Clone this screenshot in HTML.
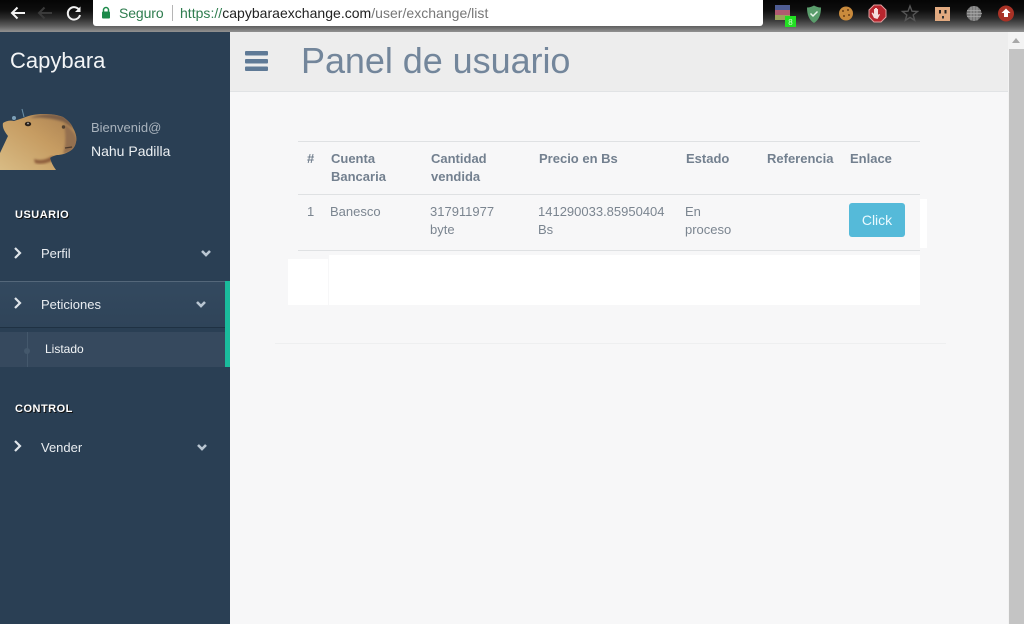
<!DOCTYPE html>
<html lang="es">
<head>
<meta charset="utf-8">
<title>Panel de usuario</title>
<style>
html,body{margin:0;padding:0;width:1024px;height:624px;overflow:hidden;background:#f7f7f8;font-family:"Liberation Sans",Arial,sans-serif}
.a{position:absolute;white-space:nowrap}
#chrome{position:absolute;left:0;top:0;width:1024px;height:32px;background:linear-gradient(#050505 0,#0d0d0d 10px,#2b2b2b 18px,#5e5e5e 26px,#8a8a8a 31px,#8f8f8f 32px)}
#url{position:absolute;left:93px;top:0;width:670px;height:26px;background:#fff;border-radius:0 0 3px 3px}
#side{position:absolute;left:0;top:32px;width:230px;height:592px;background:#2a3f54}
#head{position:absolute;left:230px;top:32px;width:778px;height:59px;background:#ededed;border-bottom:1px solid #e1e3e5}
#scroll{position:absolute;left:1008px;top:32px;width:16px;height:592px;background:#f3f3f3}
.th{font-weight:bold;font-size:13px;line-height:18px;color:#73808f}
.td{font-size:13px;line-height:18px;color:#7b8590}
.nav{font-size:13px;color:#e9edf1;line-height:16px}
.sec{font-size:11px;font-weight:bold;color:#fff;letter-spacing:.5px;line-height:13px;text-shadow:1px 1px 0 #111}
</style>
</head>
<body>
<div id="chrome"></div>
<svg class="a" style="left:0;top:0" width="90" height="28" viewBox="0 0 90 28" fill="none">
<path d="M25 13H12M17.500 7.500L12 13l5.500 5.500" stroke="#f2f2f2" stroke-width="2"/>
<path d="M52 13H39M44.500 7.500L39 13l5.500 5.500" stroke="#3a3a3a" stroke-width="2"/>
<path d="M79.500 10.500A6.200 6.200 0 1 0 80 15" stroke="#f2f2f2" stroke-width="2"/>
<path d="M80.500 6.500v5.500H75z" fill="#f2f2f2"/>
</svg>
<div id="url"></div>
<svg class="a" style="left:101px;top:6px" width="10" height="13" viewBox="0 0 10 13"><path d="M2.500 6V4a2.500 2.500 0 0 1 5 0v2" fill="none" stroke="#1c8a4a" stroke-width="1.500"/><rect x="1" y="5.500" width="8" height="7" rx="1" fill="#1c8a4a"/></svg>
<div class="a" style="left:119px;top:5px;font-size:14px;line-height:17px;color:#2f7d4f;letter-spacing:-.1px">Seguro</div>
<div class="a" style="left:172px;top:5px;width:1px;height:16px;background:#b5b5b5"></div>
<div class="a" style="left:180px;top:5px;font-size:14px;line-height:17px;color:#777;letter-spacing:.02px"><span style="color:#2f7d4f">https://</span><span style="color:#222">capybaraexchange.com</span>/user/exchange/list</div>

<!-- toolbar extension icons -->
<svg class="a" style="left:764px;top:0" width="260" height="30" viewBox="0 0 260 30">
<rect x="11" y="5" width="15" height="5" fill="#4f5d94"/><rect x="11" y="10" width="15" height="5" fill="#b05a70"/><rect x="11" y="15" width="15" height="5" fill="#9aa35a"/>
<rect x="21" y="16" width="11" height="11" fill="#22e022"/><text x="26.500" y="25" font-size="8" fill="#c8ffc8" text-anchor="middle" font-family="Liberation Sans">8</text>
<path d="M43 7.500c3 0 5-1 7-2 2 1 4 2 7 2 0 7-2 12.500-7 15.500-5-3-7-8.500-7-15.500z" fill="#5a9d6c"/><path d="M46.500 13.500l2.500 2.500 4.500-4.500" fill="none" stroke="#e8f5ea" stroke-width="1.500"/>
<circle cx="82" cy="13.500" r="7" fill="#c98a3c"/><circle cx="79" cy="11" r="1" fill="#6b3f17"/><circle cx="84" cy="10" r="1" fill="#6b3f17"/><circle cx="85" cy="15" r="1" fill="#6b3f17"/><circle cx="80" cy="16" r="1" fill="#6b3f17"/>
<path d="M110 5h7l5 5v7l-5 5h-7l-5-5v-7z" fill="#b8262e" stroke="#e2a0a0" stroke-width="1"/><path d="M110 18l-2.500-5 1-.5 1.500 1.500V9h1v3-4h1v4-4h1v4-3h1v6l1-1 1 .5-2.500 4.500z" fill="#f5dcdc"/>
<path d="M146 6l2 5.200 5.500.3-4.300 3.500 1.500 5.400-4.700-3-4.700 3 1.500-5.400-4.300-3.500 5.500-.3z" fill="none" stroke="#555" stroke-width="1.400"/>
<rect x="171" y="7" width="15" height="14" fill="#e2aa80"/><rect x="175" y="10" width="2" height="3.500" fill="#222"/><rect x="180.500" y="10" width="2" height="3.500" fill="#222"/><rect x="178" y="16" width="2" height="2.500" fill="#333"/>
<circle cx="210" cy="13.500" r="7.500" fill="#777"/><path d="M203 10.500h14M203 13.500h15M203 16.500h14M207 6.500v14M210 6v15M213 6.500v14" stroke="#aaa" stroke-width=".8"/>
<circle cx="242" cy="13.500" r="8" fill="#a93226"/><path d="M242 8.500l4.500 4.500h-2.500v4h-4v-4h-2.500z" fill="#fff"/>
</svg>

<div id="side"></div>
<div class="a" style="left:10px;top:48px;font-size:22px;line-height:26px;color:#f3f5f7">Capybara</div>

<!-- capybara avatar -->
<svg class="a" style="left:0;top:100px" width="80" height="72" viewBox="0 0 80 72">
<defs>
<linearGradient id="f" x1="0" y1="1" x2="1" y2="0"><stop offset="0" stop-color="#d8bb84"/><stop offset=".55" stop-color="#c69c62"/><stop offset="1" stop-color="#a97f50"/></linearGradient>
<filter id="b" x="-10%" y="-10%" width="120%" height="120%"><feGaussianBlur stdDeviation="1"/></filter>
<clipPath id="c"><path d="M0 70V53L8 36C5 32 2 28 3 23C6 21 10 20 14 21L23 18C30 15 37 14 43 14C52 14 58 15 63 17C69 21 72 25 73 28C76 33 77 38 76 42C75 47 73 49 70 51C65 54 61 55 57 55C53 56 51 57 50 58C51 62 53 66 56 70Z"/></clipPath>
</defs>
<path d="M0 70V53L8 36C5 32 2 28 3 23C6 21 10 20 14 21L23 18C30 15 37 14 43 14C52 14 58 15 63 17C69 21 72 25 73 28C76 33 77 38 76 42C75 47 73 49 70 51C65 54 61 55 57 55C53 56 51 57 50 58C51 62 53 66 56 70Z" fill="url(#f)"/>
<g clip-path="url(#c)">
<path d="M30 18C38 14 52 13 63 16C69 20 72 24 74 29L64 22C52 18 40 17 30 18Z" fill="#7d5f47" filter="url(#b)"/>
<path d="M64 24C70 28 78 34 77 44C75 50 70 52 63 54C66 46 66 34 64 24Z" fill="#94704f" filter="url(#b)"/>
<path d="M34 59C40 61 46 60 52 56L56 58C50 63 42 65 35 63Z" fill="#8f5f3c" filter="url(#b)"/>
</g>
<ellipse cx="28" cy="24" rx="3.200" ry="2.300" fill="#2b2119"/><circle cx="28" cy="23.500" r=".9" fill="#b5b5b5"/>
<circle cx="63.500" cy="27" r="1.700" fill="#50402f"/>
<path d="M65 48l7-1" stroke="#4d3a2c" stroke-width="1.300"/>
<circle cx="14" cy="18" r="2" fill="#7da0b8"/><path d="M22 9l2 8" stroke="#6b90a8" stroke-width="1"/>
</svg>

<div class="a" style="left:91px;top:120px;font-size:13px;line-height:16px;color:#a9b3bd">Bienvenid@</div>
<div class="a" style="left:91px;top:143px;font-size:14px;line-height:16px;color:#ecf0f3">Nahu Padilla</div>

<div class="a sec" style="left:15px;top:209px">USUARIO</div>
<div class="a nav" style="left:41px;top:246px">Perfil</div>

<!-- active item -->
<div class="a" style="left:0;top:281px;width:225px;height:45px;background:linear-gradient(#33495f,#2f4459);border-top:1px solid #54677a;border-bottom:1px solid #1f3143"></div>
<div class="a" style="left:0;top:332px;width:225px;height:35px;background:#36495e"></div>
<div class="a" style="left:225px;top:281px;width:5px;height:86px;background:#1abb9c"></div>
<div class="a" style="left:27px;top:332px;width:1px;height:35px;background:#44586c"></div>
<div class="a" style="left:24px;top:348px;width:6px;height:6px;border-radius:50%;background:#44586c"></div>
<div class="a nav" style="left:41px;top:297px">Peticiones</div>
<div class="a" style="left:45px;top:342px;font-size:12px;line-height:15px;color:#f1f4f6">Listado</div>

<div class="a sec" style="left:15px;top:403px">CONTROL</div>
<div class="a nav" style="left:41px;top:440px">Vender</div>

<svg class="a" style="left:0;top:240px" width="230" height="220" viewBox="0 0 230 220" fill="none" stroke="#dfe5ea" stroke-width="2.200">
<path d="M15 8l5 5-5 5M15 58l5 5-5 5M15 201l5 5-5 5"/>
<g stroke="#b9c6d2" stroke-width="2.600"><path d="M202 11l4 4 4-4M197 62l4 4 4-4M198 205l4 4 4-4"/></g>
</svg>

<div id="head"></div>
<svg class="a" style="left:245px;top:51px" width="23" height="20"><rect width="23" height="4.500" rx="1" fill="#5f7a96"/><rect y="8" width="23" height="4.500" rx="1" fill="#5f7a96"/><rect y="15.500" width="23" height="4.500" rx="1" fill="#5f7a96"/></svg>
<div class="a" style="left:301px;top:40px;font-size:36px;line-height:42px;color:#73869b;letter-spacing:-.05px">Panel de usuario</div>

<div id="scroll"></div>
<div class="a" style="left:1012px;top:38px;width:0;height:0;border-left:4px solid transparent;border-right:4px solid transparent;border-bottom:5px solid #a8a8a8"></div>
<div class="a" style="left:1009px;top:49px;width:15px;height:575px;background:#c4c4c4"></div>

<!-- table -->
<div class="a" style="left:298px;top:141px;width:622px;height:1px;background:#dfe1e3"></div>
<div class="a th" style="left:307px;top:150px">#</div>
<div class="a th" style="left:331px;top:150px">Cuenta<br>Bancaria</div>
<div class="a th" style="left:431px;top:150px">Cantidad<br>vendida</div>
<div class="a th" style="left:539px;top:150px">Precio en Bs</div>
<div class="a th" style="left:686px;top:150px">Estado</div>
<div class="a th" style="left:767px;top:150px">Referencia</div>
<div class="a th" style="left:850px;top:150px">Enlace</div>
<div class="a" style="left:298px;top:194px;width:622px;height:1px;background:#dfe1e3"></div>
<div class="a td" style="left:307px;top:203px">1</div>
<div class="a td" style="left:330px;top:203px">Banesco</div>
<div class="a td" style="left:430px;top:203px">317911977<br>byte</div>
<div class="a td" style="left:538px;top:203px">141290033.85950404<br>Bs</div>
<div class="a td" style="left:685px;top:203px">En<br>proceso</div>
<div class="a" style="left:849px;top:203px;width:56px;height:34px;background:#55bad9;border-radius:3px;color:#eafaff;font-size:14px;line-height:34px;text-align:center">Click</div>
<div class="a" style="left:920px;top:199px;width:7px;height:49px;background:#fff"></div>
<div class="a" style="left:298px;top:250px;width:622px;height:1px;background:#dfe1e3"></div>
<div class="a" style="left:288px;top:259px;width:40px;height:46px;background:#fff"></div>
<div class="a" style="left:329px;top:255px;width:591px;height:50px;background:#fff"></div>
<div class="a" style="left:275px;top:343px;width:671px;height:1px;background:#eeeff0"></div>
</body>
</html>
